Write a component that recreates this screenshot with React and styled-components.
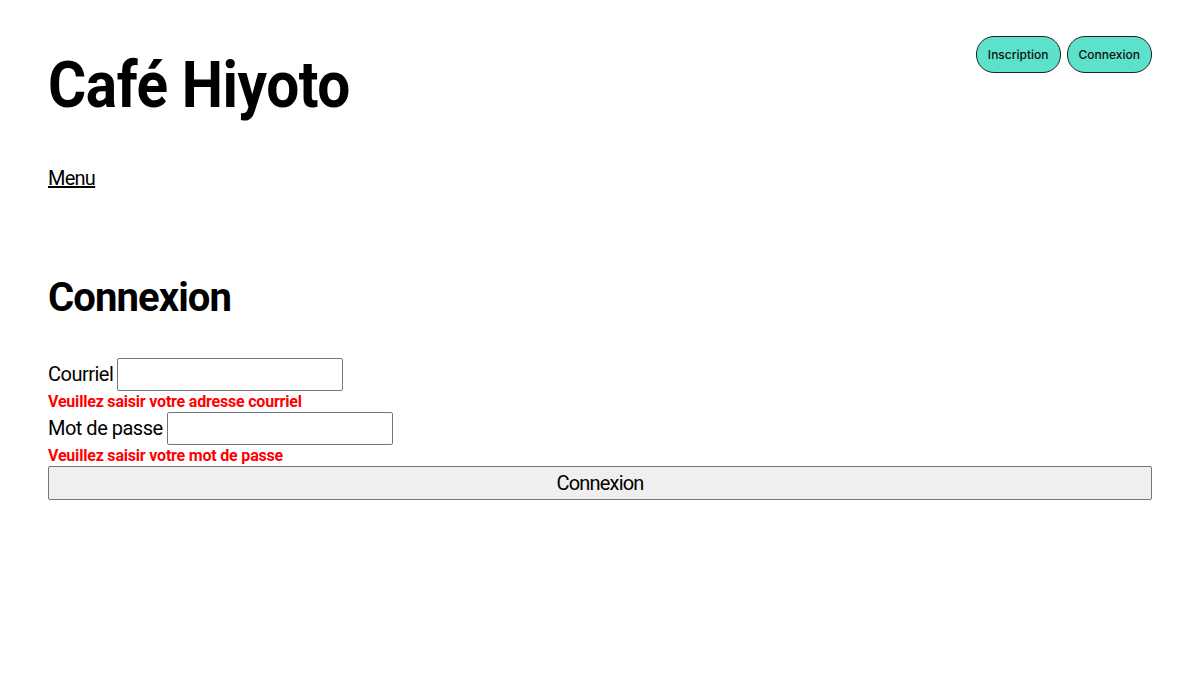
import React from 'react'
import styled, { createGlobalStyle } from 'styled-components'

const GlobalStyle = createGlobalStyle`
  body {
    margin: 0;
    background: #fff;
    font-family: Roboto, "Liberation Sans", sans-serif;
    color: #000;
  }
`

const Page = styled.div`
  padding: 36px 48px;
`

const Header = styled.header`
  display: flex;
  justify-content: space-between;
  align-items: flex-start;
`

const Title = styled.h1`
  margin: 14px 0 0;
  font-size: 65px;
  font-weight: 700;
  line-height: 1.1;
  letter-spacing: -0.5px;
  transform: scaleX(0.9);
  transform-origin: left center;
`

const Auth = styled.div`
  display: flex;
  gap: 6px;
`

const Pill = styled.button`
  height: 37px;
  padding: 0 11px;
  border: 1px solid #222;
  border-radius: 18px;
  background: #5ce1cb;
  font-family: Inter, "Noto Sans", sans-serif;
  font-size: 12px;
  font-weight: 500;
  color: #111;
`

const Nav = styled.nav`
  margin-top: 44px;
`

const NavLink = styled.a`
  font-size: 20px;
  letter-spacing: -0.75px;
  color: #000;
  text-decoration: underline;
`

const Heading = styled.h2`
  margin: 84px 0 36px;
  font-size: 40px;
  font-weight: 700;
  line-height: 1.2;
  letter-spacing: -0.9px;
`

const Form = styled.form`
  display: flex;
  flex-direction: column;
`

const Field = styled.div`
  display: flex;
  align-items: center;
  gap: 4px;
  font-size: 20px;
  letter-spacing: -0.5px;
`

const Input = styled.input`
  width: 226px;
  height: 33px;
  box-sizing: border-box;
  border: 1px solid #767676;
  border-radius: 2px;
  font-size: 16px;
`

const Error = styled.div`
  color: #ff0000;
  font-size: 16px;
  font-weight: 700;
  line-height: 21px;
  letter-spacing: -0.2px;
`

const Submit = styled.button`
  width: 100%;
  height: 34px;
  border: 1px solid #767676;
  border-radius: 2px;
  background: #efefef;
  font-family: Roboto, "Liberation Sans", sans-serif;
  font-size: 20px;
  letter-spacing: -0.8px;
  color: #000;
`

export default function App() {
  return (
    <>
      <GlobalStyle />
      <Page>
        <Header>
          <Title>Café Hiyoto</Title>
          <Auth>
            <Pill>Inscription</Pill>
            <Pill>Connexion</Pill>
          </Auth>
        </Header>
        <Nav>
          <NavLink href="#">Menu</NavLink>
        </Nav>
        <Heading>Connexion</Heading>
        <Form onSubmit={(e) => e.preventDefault()}>
          <Field>
            <label htmlFor="courriel">Courriel</label>
            <Input id="courriel" type="email" />
          </Field>
          <Error>Veuillez saisir votre adresse courriel</Error>
          <Field>
            <label htmlFor="mdp">Mot de passe</label>
            <Input id="mdp" type="password" />
          </Field>
          <Error>Veuillez saisir votre mot de passe</Error>
          <Submit type="submit">Connexion</Submit>
        </Form>
      </Page>
    </>
  )
}
